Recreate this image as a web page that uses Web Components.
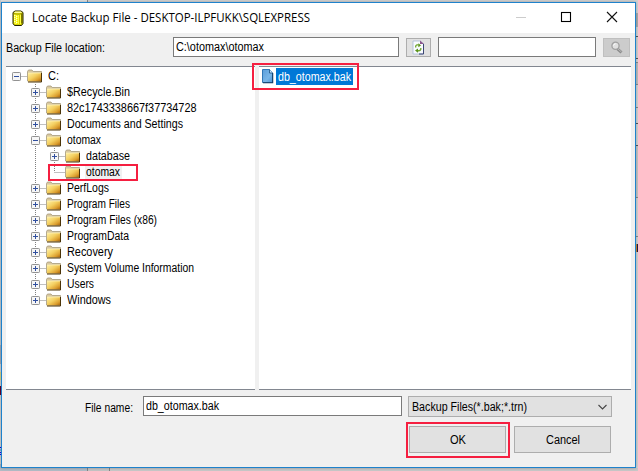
<!DOCTYPE html>
<html lang="en">
<head>
<meta charset="utf-8">
<title>Locate Backup File</title>
<style>
html,body{margin:0;height:100%;overflow:hidden}
body{font:12px/16px "Liberation Sans",Arial,sans-serif;color:#000;background:#d0d0d0}
</style>
</head>
<body>
<backup-dialog></backup-dialog>
<script>
function define(name, html, ready) {
  customElements.define(name, class extends HTMLElement {
    connectedCallback() {
      if (this.shadowRoot) return;
      this.attachShadow({mode: 'open'}).innerHTML = html;
      if (ready) ready.call(this, this.shadowRoot);
    }
  });
}

// Text condensed or widened so that it takes a given width
define('fit-text', `<style>:host{display:inline-block;white-space:pre;flex:none}span{display:inline-block;transform-origin:0 50%}</style><span></span>`, function (r) {
  const s = r.querySelector('span'), t = this.getAttribute('text'), w = +this.getAttribute('w');
  s.textContent = t;
  const natural = s.getBoundingClientRect().width;
  if (w && natural) {
    s.style.transform = `scaleX(${w / natural})`;
    s.style.marginRight = (w - natural) + 'px';
  }
});

define('desktop-edges', `<style>:host{display:block;position:absolute;inset:0}svg{display:block}</style>
<svg width="638" height="471" shape-rendering="crispEdges">
<rect width="638" height="471" fill="#d2d2d2"/>
<rect width="87" height="2" fill="#dedede"/><rect x="87" width="1" height="2" fill="#8a8a8a"/>
<rect width="1" height="345" fill="#c3ccd4"/><rect y="345" width="1" height="19" fill="#a3adba"/><rect y="364" width="1" height="8" fill="#d5d5d5"/>
<rect y="372" width="1" height="8" fill="#dcd78a"/><rect y="386" width="1" height="9" fill="#64002c"/><rect y="395" width="1" height="51" fill="#d6d6d6"/>
<rect y="447" width="1" height="1" fill="#00f"/><rect y="449" width="1" height="2" fill="#71b8e0"/><rect y="452" width="1" height="1" fill="#00f"/><rect y="454" width="1" height="1" fill="#00f"/>
<rect y="464" width="1" height="7" fill="#a9b4c0"/><rect y="468" width="87" height="3" fill="#b2bcc6"/>
<rect x="87" y="468" width="1" height="3" fill="#858585"/><rect x="88" y="468" width="21" height="3" fill="#c4c4c4"/><rect x="109" y="468" width="1" height="3" fill="#858585"/>
<rect x="110" y="468" width="528" height="3" fill="#c8c8c8"/>
<g transform="translate(636 0)"><rect y="13" width="2" height="14" fill="#aaa"/><rect y="36" width="2" height="1" fill="#555"/><rect y="37" width="2" height="21" fill="#d0d0d0"/><rect y="58" width="2" height="1" fill="#555"/><rect y="62" width="2" height="1" fill="#888"/><rect y="63" width="2" height="21" fill="#bdbdbd"/><rect y="84" width="2" height="1" fill="#888"/><rect y="107" width="2" height="1" fill="#888"/><rect y="123" width="2" height="1" fill="#555"/><rect y="145" width="2" height="1" fill="#555"/><rect y="146" width="2" height="51" fill="#c4c4c4"/><rect y="197" width="2" height="1" fill="#888"/><rect y="236" width="2" height="1" fill="#888"/><rect y="244" width="1" height="8" fill="#c98b2f"/><rect x="1" y="244" width="1" height="8" fill="#2c1840"/></g>
</svg>`);

define('title-bar', `<style>
:host{display:flex;align-items:center;height:30px;background:#fff;flex:none;padding-left:9px;box-sizing:border-box;font:12px/16px "Open Sans","Noto Sans",sans-serif}
svg{flex:none;display:block}.t{margin-left:8px;font-size:12px}.c{margin-left:auto}
</style>
<svg width="13" height="18" viewBox="0 0 13 18"><path d="M2 3.500 4 2h6l2 1.500v11L10.500 16.500H3.500L2 14.500z" fill="#d9d500" stroke="#222000" stroke-width="1"/><path d="M3 5.500h7v9.500H4L3 14z" fill="#ffff3a"/><path d="M3 4h7l1-.6-1-.8H4z" fill="#fffb9a"/><path d="M3.500 6v8M5.500 7v8" stroke="#fffdd0" stroke-width="1" stroke-dasharray="1 1"/><path d="M4.500 7v8M6.500 6v9" stroke="#f0e800" stroke-width="1" stroke-dasharray="1 1"/><path d="M8.500 6v9" stroke="#d0c800"/><path d="M10.800 4.500v10" stroke="#555000"/><path d="M3 4.500c2 1 6 1 7.500 0" fill="none" stroke="#7b7600" stroke-width=".6"/></svg>
<fit-text class="t" text="Locate Backup File - DESKTOP-ILPFUKK\\SQLEXPRESS" w="278"></fit-text>
<svg class="c" width="119" height="30" viewBox="0 0 119 30" fill="none"><path d="M0 14.500h10" stroke="#ccc"/><rect x="45.500" y="9.500" width="9" height="9" stroke="#000" stroke-width="1.100"/><path d="M91 9l10 10M101 9l-10 10" stroke="#111" stroke-width="1.100"/></svg>`);

define('text-field', `<style>:host{display:flex;align-items:center;box-sizing:border-box;height:20px;border:1px solid #7a7a7a;background:#fff;padding-left:2px;flex:none}</style><slot></slot>`);

define('push-button', `<style>:host{display:flex;align-items:center;justify-content:center;box-sizing:border-box;border:1px solid #adadad;background:#e1e1e1;flex:none}
:host([disabled]){background:#ccc;border-color:#bfbfbf}</style><slot></slot>`);

define('refresh-icon', `<style>:host,svg{display:block}</style><svg width="13" height="15" viewBox="0 0 13 15"><path d="M1 1h7.500l3 3v10H1z" fill="#f9fbff" stroke="#aab9d6" stroke-width=".8"/><path d="M11.500 4v10H7" fill="none" stroke="#3b4674" stroke-width="1"/><path d="M8 .5V4h4z" fill="#8a568d"/><path d="M3.700 7.500V6.200C4 4.800 5.600 4.600 7 5M8.800 8v1.300c-.4 1.400-2 1.600-3.500 1.200" fill="none" stroke="#6fa52c" stroke-width="1.300"/><path d="M6.500 3.200 9 5.400 6.300 7.200zM6 8.500l-3 2L6 12.700z" fill="#5b931c"/></svg>`);

define('search-icon', `<style>:host,svg{display:block}</style><svg width="14" height="14" viewBox="0 0 14 14"><path d="M7 7.500l4.500 4" stroke="#8b8b8b" stroke-width="3"/><path d="M8 8l3.500 3" stroke="#bbb" stroke-width="1"/><circle cx="5.500" cy="4.800" r="3.600" fill="#e0e0e0" stroke="#a0a0a0" stroke-width="1.300"/><path d="M3.500 4.500c.2-1 1-1.600 2-1.700" fill="none" stroke="#fff"/></svg>`);

define('folder-icon', `<style>:host,svg{display:block;flex:none}</style><svg width="16" height="14" viewBox="0 0 16 14"><defs><linearGradient id="g" x1="0" y1="0" x2="1" y2="1"><stop offset="0" stop-color="#fff0a4"/><stop offset=".45" stop-color="#f4cf60"/><stop offset=".75" stop-color="#dda030"/><stop offset="1" stop-color="#a86208"/></linearGradient></defs><path d="M.5 12V2.500L1.500 1H5l1.200 1.500H14.500V12z" fill="#d9c9a0" stroke="#a79a7c" stroke-width=".8"/><path d="M1 4h13V12.500H1z" fill="url(#g)"/><path d="M1 4h13" stroke="#fff3b8" stroke-width=".7"/><path d="M14.500 4v9H1" fill="none" stroke="#4b3408" stroke-width="1"/></svg>`);

define('file-icon', `<style>:host,svg{display:block;flex:none}</style><svg width="12" height="15" viewBox="0 0 12 15"><defs><linearGradient id="g" x1="0" y1="0" x2="1" y2="1"><stop stop-color="#5b9eda"/><stop offset=".6" stop-color="#79b6e8"/><stop offset="1" stop-color="#4d94d5"/></linearGradient></defs><path d="M.5.500H7.500L10.500 4V13.500H.5z" fill="url(#g)" stroke="#3278b7"/><path d="M7.500.500V4H10.500" fill="#cfe8fa" stroke="#174c7c" stroke-width=".8"/><path d="M10.700 4v9.800H1" fill="none" stroke="#123e68" stroke-width="1.100"/></svg>`);

// One line of the folder tree: guide lines, expander, folder and name
define('tree-item', `<style>:host{display:flex;height:16px;align-items:center}svg{display:block;flex:none}folder-icon{margin-right:5px}fit-text{line-height:16px}:host([active]) fit-text{background:#f0f0f0;padding-right:2px;margin-left:-1px;padding-left:1px;line-height:15px}</style><span class="g"></span><folder-icon></folder-icon><fit-text></fit-text>`, function (r) {
  const level = +this.getAttribute('level'), sign = this.getAttribute('sign'), last = this.hasAttribute('last');
  const cx = 10.5 + level * 19, w = 21 + level * 19;
  const dots = 'stroke="#808080" stroke-dasharray="1 1"';
  let s = '';
  if (level) s += `<path d="M${cx} 0V${last ? 8 : 16}" ${dots}/>`;
  if (level === 2) s += `<path d="M29.500 0V16" ${dots}/>`;
  s += `<path d="M${cx} 8.500H${w}" ${dots}/>`;
  if (sign) {
    s += `<rect x="${cx - 4}" y="4.500" width="8" height="8" rx=".8" fill="#f6f6f6" stroke="#929292"/><path d="M${cx - 2.5} 8.500h5" stroke="#304f9f"/>`;
    if (sign === '+') s += `<path d="M${cx} 6v5" stroke="#304f9f"/>`;
  }
  r.querySelector('.g').innerHTML = `<svg width="${w}" height="16" fill="none">${s}</svg>`;
  const f = document.createElement('fit-text');
  f.setAttribute('text', this.getAttribute('text'));
  f.setAttribute('w', this.getAttribute('w'));
  r.querySelector('fit-text').replaceWith(f);
});

define('folder-tree', `<style>:host{display:block;box-sizing:border-box;width:249px;background:#fff;border-top:1px solid #828790;border-bottom:1px solid #828790;padding-top:1px}</style>
<tree-item level="0" sign="-" text="C:" w="11"></tree-item>
<tree-item level="1" sign="+" text="$Recycle.Bin" w="63"></tree-item>
<tree-item level="1" sign="+" text="82c1743338667f37734728" w="129.500"></tree-item>
<tree-item level="1" sign="+" text="Documents and Settings" w="116"></tree-item>
<tree-item level="1" sign="-" text="otomax" w="34"></tree-item>
<tree-item level="2" sign="+" text="database" w="44"></tree-item>
<tree-item level="2" last active text="otomax" w="34"></tree-item>
<tree-item level="1" sign="+" text="PerfLogs" w="42"></tree-item>
<tree-item level="1" sign="+" text="Program Files" w="63"></tree-item>
<tree-item level="1" sign="+" text="Program Files (x86)" w="90"></tree-item>
<tree-item level="1" sign="+" text="ProgramData" w="62"></tree-item>
<tree-item level="1" sign="+" text="Recovery" w="46"></tree-item>
<tree-item level="1" sign="+" text="System Volume Information" w="127"></tree-item>
<tree-item level="1" sign="+" text="Users" w="27"></tree-item>
<tree-item level="1" sign="+" last text="Windows" w="44"></tree-item>`);

define('file-list', `<style>:host{display:block;box-sizing:border-box;width:372px;background:#fff;border-top:1px solid #828790;border-bottom:1px solid #828790;padding:1px 0 0 3px}
.r{display:flex;align-items:center}.n{margin-left:2px;background:#0078d7;color:#fff;padding:1px 2px 0;height:16px;display:flex}</style>
<div class="r"><file-icon></file-icon><div class="n"><fit-text text="db_otomax.bak" w="73"></fit-text></div></div>`);

define('mark-box', `<style>:host{position:absolute;box-sizing:border-box;border:2px solid #f51f40}</style>`);

define('backup-dialog', `<style>
:host{display:block;position:relative;width:638px;height:471px}
.win{position:relative;box-sizing:border-box;width:635px;height:466px;margin-left:1px;top:2px;border:1px solid #1e82cc;background:#f0f0f0;display:flex;flex-direction:column;box-shadow:0 0 3px #0004}
.bar{display:flex;align-items:flex-start;padding:4px 0 0 4px;height:33px;box-sizing:border-box;flex:none}
.bar .l{width:167px;margin-top:3px}
.panes{display:flex;gap:4px;padding-left:4px;height:324px;flex:none}
.name{display:flex;padding:6px 0 0 83px;height:36px;box-sizing:border-box}
.name .l{width:58px;margin-top:4px}
.acts{display:flex;gap:8px;padding-left:407px}
push-button.i{height:19px;margin-top:1px}
.acts push-button{width:97px;height:27px}
.combo{width:204px;height:21px;margin-left:6px;justify-content:space-between;padding:0 3px}
svg{display:block}
</style>
<desktop-edges></desktop-edges>
<div class="win">
<title-bar></title-bar>
<div class="bar"><fit-text class="l" text="Backup File location:" w="99"></fit-text>
<text-field style="width:226px"><fit-text text="C:\\otomax\\otomax" w="88"></fit-text></text-field>
<push-button class="i" style="width:25px;margin-left:7px"><refresh-icon></refresh-icon></push-button>
<text-field style="width:158px;margin-left:7px"></text-field>
<push-button class="i" disabled style="width:27px;margin-left:7px"><search-icon></search-icon></push-button></div>
<div class="panes"><folder-tree></folder-tree><file-list></file-list></div>
<div class="name"><fit-text class="l" text="File name:" w="48"></fit-text>
<text-field style="width:259px"><fit-text text="db_otomax.bak" w="73"></fit-text></text-field>
<push-button class="combo"><fit-text text="Backup Files(*.bak;*.trn)" w="115"></fit-text><svg width="11" height="8" viewBox="0 0 11 8"><path d="M1.500 2l4 4 4-4" fill="none" stroke="#444" stroke-width="1.100"/></svg></push-button></div>
<div class="acts"><push-button><fit-text text="OK" w="16"></fit-text></push-button><push-button><fit-text text="Cancel" w="34"></fit-text></push-button></div>
</div>
<mark-box style="left:252px;top:63px;width:107px;height:27px"></mark-box>
<mark-box style="left:48px;top:164px;width:90px;height:17px"></mark-box>
<mark-box style="left:406px;top:422px;width:104px;height:36px"></mark-box>`);
</script>
</body>
</html>
